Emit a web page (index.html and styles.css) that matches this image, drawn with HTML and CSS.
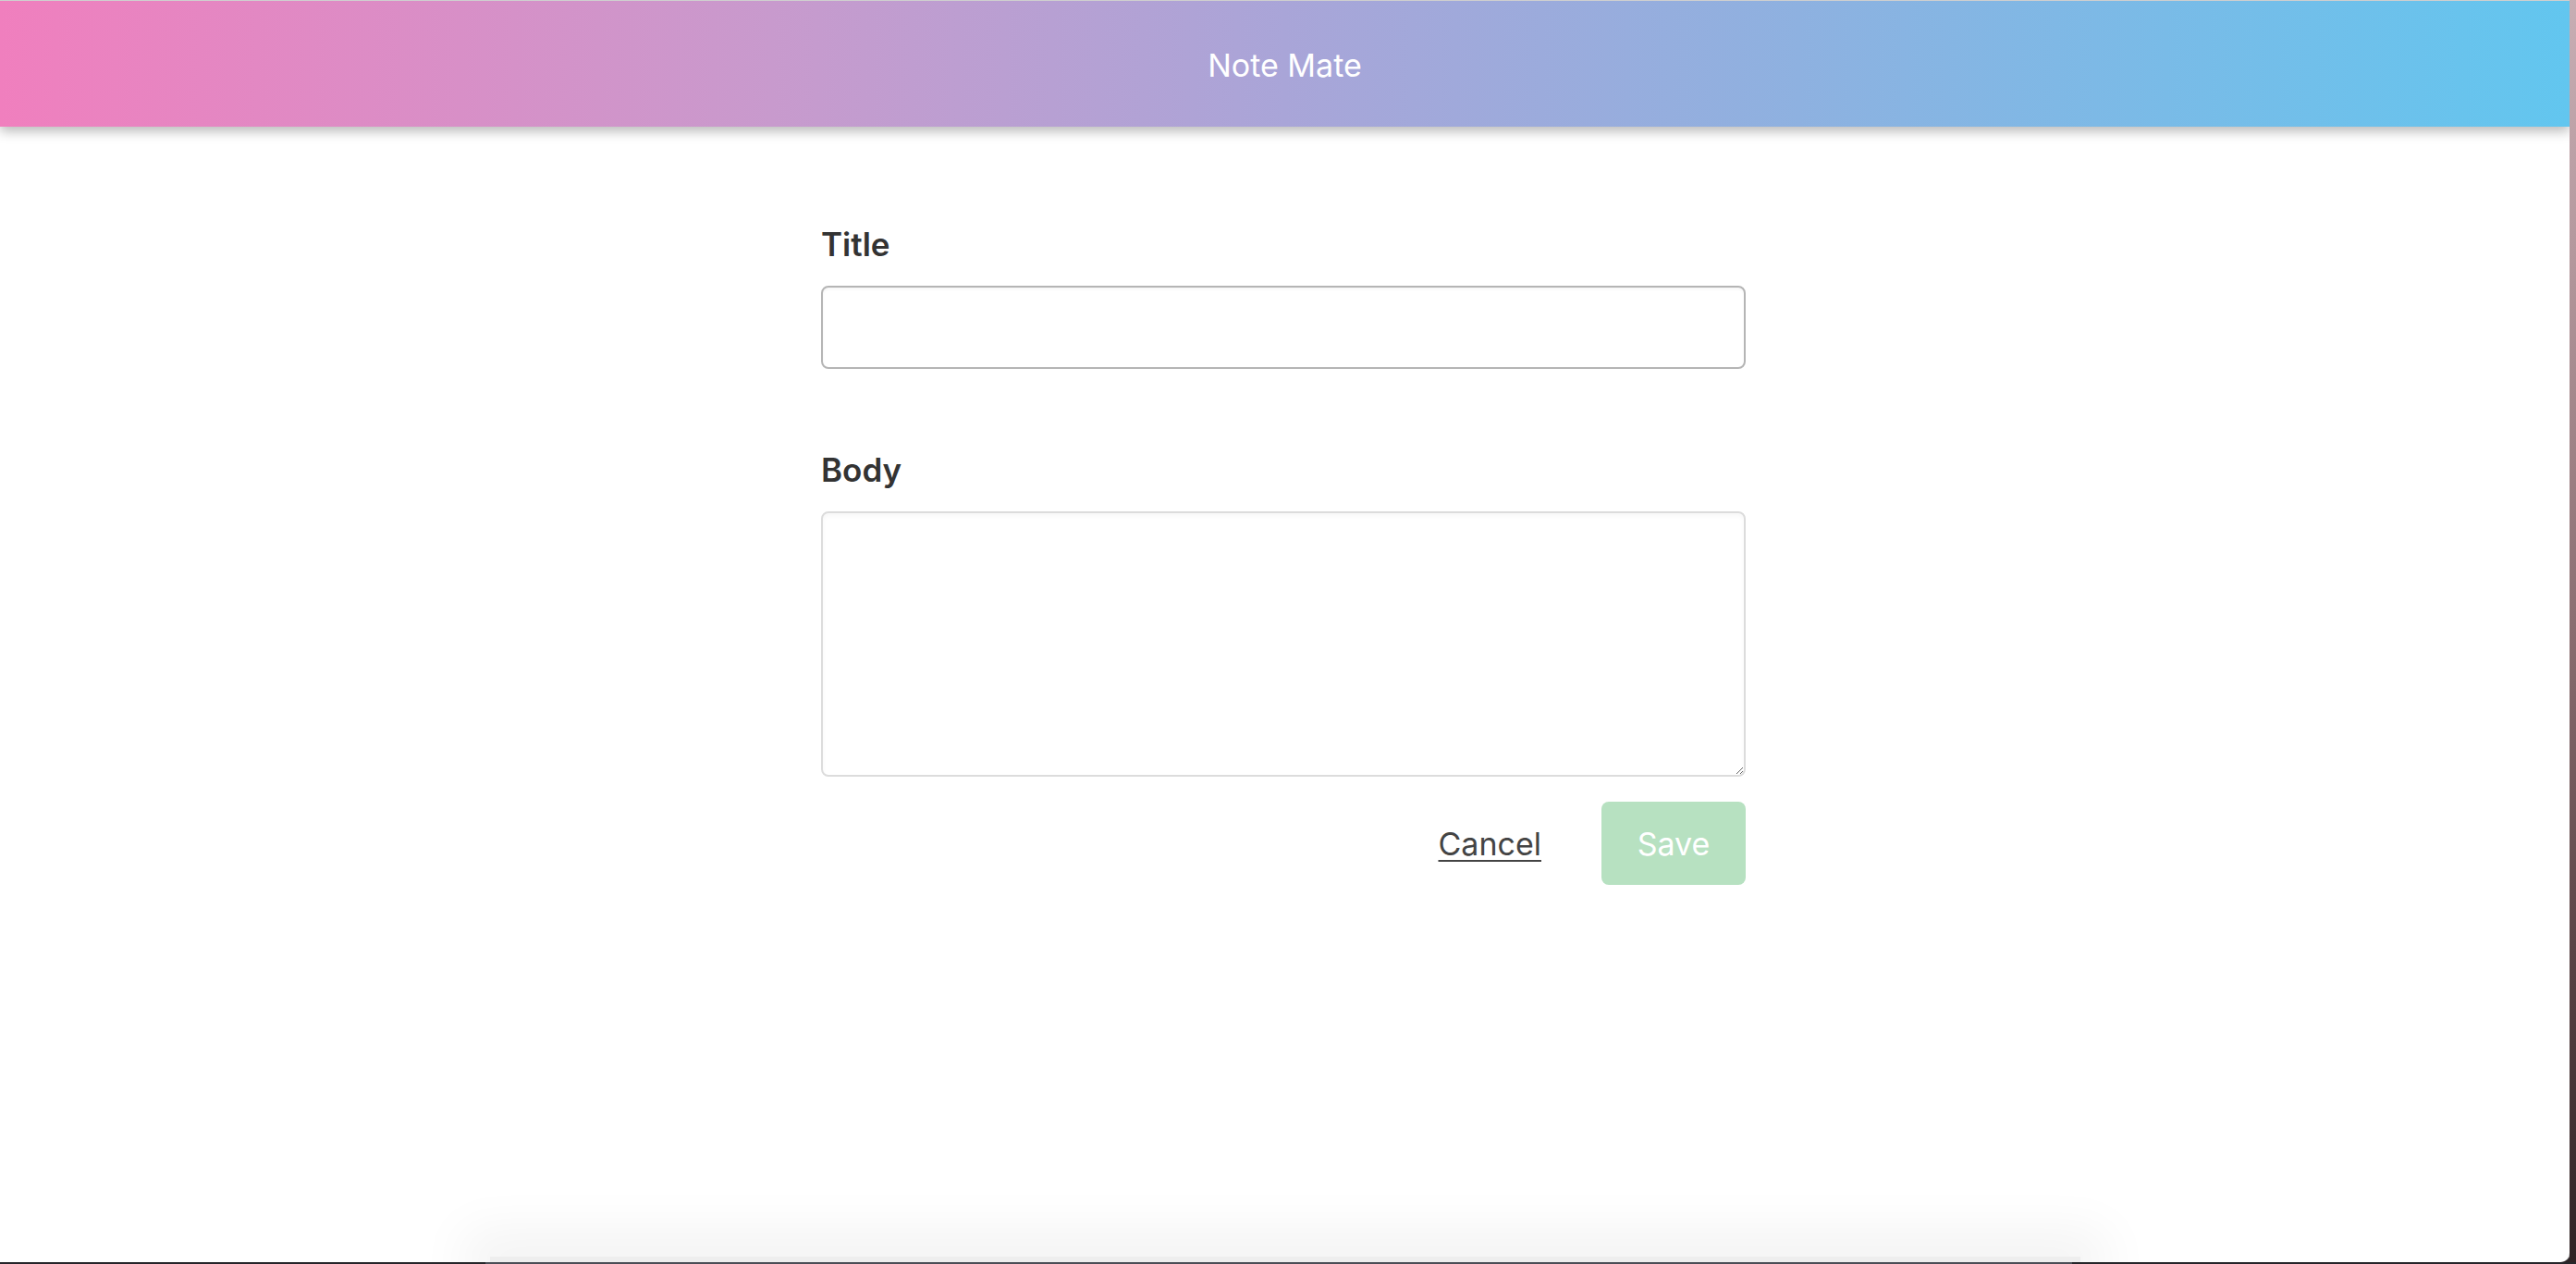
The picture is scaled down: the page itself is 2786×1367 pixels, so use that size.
FILE: index.html
```html
<!DOCTYPE html>
<html lang="en">
<head>
<meta charset="utf-8">
<title>Note Mate</title>
<link rel="stylesheet" href="styles.css">
</head>
<body>
  <div class="screen">
    <div class="window">
      <header class="app-bar">Note Mate</header>
      <main class="editor">
        <form class="note-form">
          <label class="field-label" for="title">Title</label>
          <input class="title-input" id="title" type="text">
          <label class="field-label body-label" for="body">Body</label>
          <textarea class="body-input" id="body"></textarea>
          <div class="actions">
            <a class="cancel-link" href="#">Cancel</a>
            <button class="save-btn" type="button">Save</button>
          </div>
        </form>
      </main>
      <div class="dock-shadow"></div>
    </div>
    <div class="desktop"></div>
  </div>
  <div class="bottom-edge">
    <div class="bottom-edge-mid"></div>
  </div>
</body>
</html>
```
FILE: styles.css
```css
html, body {
  margin: 0;
  padding: 0;
  height: 1367px;
  overflow: hidden;
  background: #2b2326;
  font-family: Inter, "Noto Sans", "Liberation Sans", sans-serif;
}

.screen {
  display: flex;
  height: 1365px;
}

.window {
  flex: 1;
  display: flex;
  flex-direction: column;
  background: #ffffff;
  border-top: 1px solid #cfcfcf;
  border-bottom-right-radius: 10px;
  overflow: hidden;
  box-shadow: 1px 0 0 #9a9a9a;
}

.desktop {
  width: 7px;
  background: linear-gradient(180deg, #c8aeb4 0%, #b4989d 20%, #8a6d70 50%, #5b4446 75%, #2f2224 100%);
}

.app-bar {
  height: 136px;
  display: flex;
  align-items: center;
  justify-content: center;
  padding-top: 3px;
  box-sizing: border-box;
  color: #ffffff;
  font-size: 34px;
  font-weight: 400;
  background: linear-gradient(90deg, #f07fbe 0%, #c89acd 30%, #a9a5d8 50%, #8eb1e0 70%, #62c6ef 100%);
  box-shadow: 0 5px 12px rgba(0, 0, 0, 0.28);
  position: relative;
  z-index: 1;
}

.editor {
  flex: 1;
  display: flex;
  justify-content: center;
  padding-top: 110px;
}

.note-form {
  width: 1000px;
  display: flex;
  flex-direction: column;
  margin-left: -3px;
}

.field-label {
  display: block;
  font-size: 35px;
  line-height: 35px;
  font-weight: 600;
  color: #333333;
  margin-bottom: 27px;
}

.body-label {
  margin-top: 92px;
}

.title-input {
  height: 90px;
  box-sizing: border-box;
  border: 2px solid #b5b5b5;
  border-radius: 8px;
  font-size: 32px;
  padding: 0 20px;
  outline: none;
  box-shadow: inset 0 2px 3px rgba(0, 0, 0, 0.04);
}

.body-input {
  height: 287px;
  box-sizing: border-box;
  border: 2px solid #dcdcdc;
  border-radius: 8px;
  font-size: 32px;
  padding: 16px 20px;
  outline: none;
  font-family: inherit;
  box-shadow: inset 0 3px 4px rgba(0, 0, 0, 0.03);
}

.actions {
  display: flex;
  justify-content: flex-end;
  align-items: center;
  gap: 65px;
  margin-top: 27px;
}

.cancel-link {
  font-size: 34px;
  color: #444444;
  text-decoration: underline;
  text-decoration-thickness: 2px;
  text-underline-offset: 5px;
}

.save-btn {
  width: 156px;
  height: 90px;
  border: none;
  border-radius: 8px;
  background: #b7e1c1;
  color: #ffffff;
  font-family: inherit;
  font-size: 34px;
  font-weight: 400;
  padding: 0;
}

.dock-shadow {
  align-self: center;
  width: 1720px;
  height: 6px;
  background: #eeeeee;
  box-shadow: 0 0 55px 28px rgba(0, 0, 0, 0.05);
}

.bottom-edge {
  height: 2px;
  background: #26262a;
  display: flex;
  justify-content: center;
}

.bottom-edge-mid {
  width: 1716px;
  margin-left: -20px;
  background: #4b4e56;
}
```
